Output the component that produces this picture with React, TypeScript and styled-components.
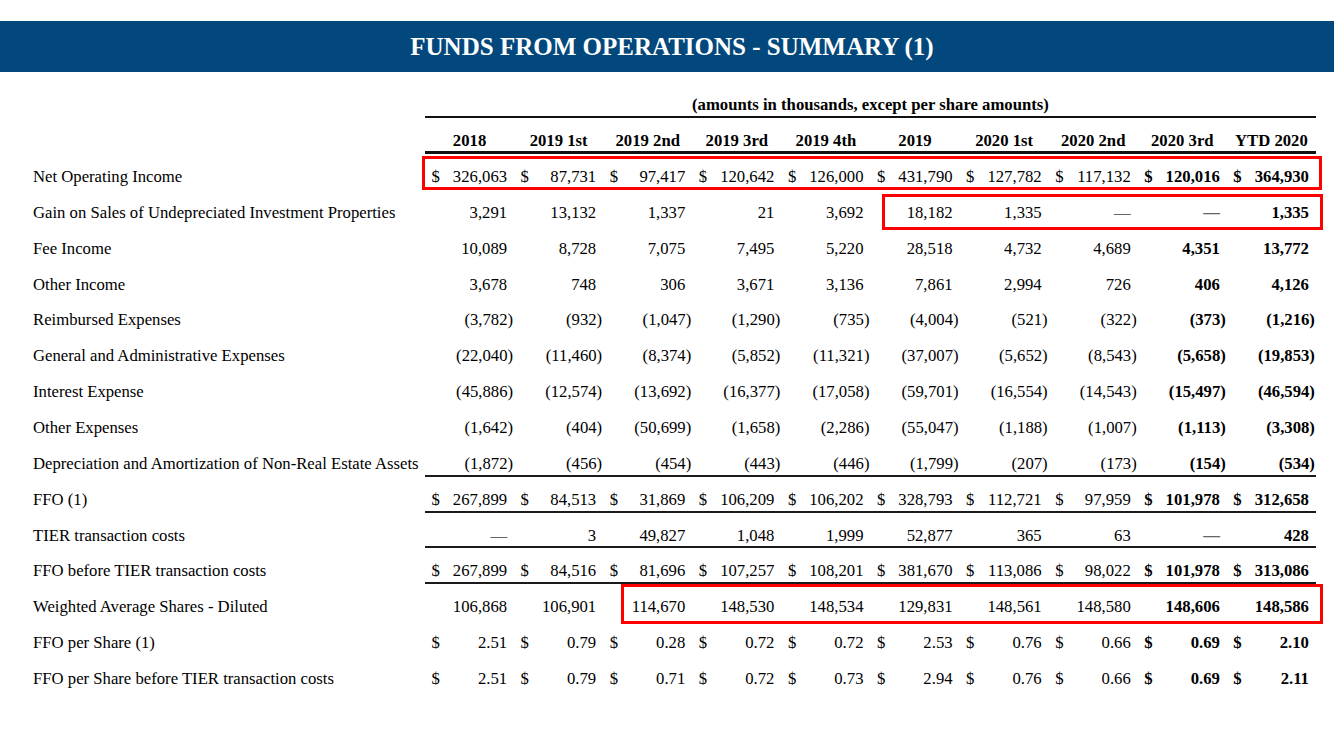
import React from "react";
import styled, { createGlobalStyle } from "styled-components";

const GlobalStyle = createGlobalStyle`
  html, body {
    margin: 0;
    padding: 0;
    background: #ffffff;
  }
  body {
    font-family: "Liberation Serif", "Times New Roman", serif;
    color: #000;
  }
`;

const COLS = "392px repeat(10, 89.1px)";

const Page = styled.div`
  position: relative;
  width: 1334px;
  height: 730px;
  padding-top: 21px;
  box-sizing: border-box;
`;

const Banner = styled.header`
  height: 51px;
  background: #03487c;
  display: flex;
  align-items: center;
  justify-content: center;
  padding-left: 10px;
  box-sizing: border-box;
`;

const Title = styled.h1`
  margin: 0;
  font-size: 25px;
  font-weight: bold;
  color: #ffffff;
  line-height: 1;
  letter-spacing: 0;
`;

const Table = styled.div`
  padding-left: 33px;
  font-size: 16.7px;
`;

const Row = styled.div<{ $h?: string }>`
  display: grid;
  grid-template-columns: ${COLS};
  height: ${(p) => p.$h ?? "35.86px"};
`;

const Subtitle = styled.div`
  grid-column: 2 / 12;
  text-align: center;
  font-weight: bold;
  line-height: 19px;
  padding-top: 23px;
  padding-bottom: 2px;
  border-bottom: 2px solid #111;
`;

const HeadCell = styled.div`
  text-align: center;
  font-weight: bold;
  line-height: 19px;
  padding-top: 13px;
  padding-bottom: 1px;
  border-bottom: 3px solid #111;
  white-space: nowrap;
`;

const Label = styled.div`
  line-height: 19px;
  padding-top: 13px;
  white-space: nowrap;
`;

const ValueCell = styled.div<{ $bold?: boolean; $rule?: boolean }>`
  display: flex;
  justify-content: space-between;
  align-items: flex-start;
  box-sizing: border-box;
  line-height: 19px;
  padding: 13px 7px 0 6.5px;
  font-weight: ${(p) => (p.$bold ? "bold" : "normal")};
  border-bottom: ${(p) => (p.$rule ? "2px solid #1a1a1a" : "none")};
  white-space: nowrap;
`;

const Dollar = styled.span``;

const Amount = styled.span<{ $neg?: boolean; $dash?: boolean }>`
  margin-right: ${(p) => (p.$neg ? "-6px" : "0")};
  color: ${(p) => (p.$dash ? "#666" : "inherit")};
`;

const Annotation = styled.div`
  position: absolute;
  box-sizing: border-box;
  border: 3px solid #ff0000;
  pointer-events: none;
`;

const headers = [
  "2018",
  "2019 1st",
  "2019 2nd",
  "2019 3rd",
  "2019 4th",
  "2019",
  "2020 1st",
  "2020 2nd",
  "2020 3rd",
  "YTD 2020",
];

type RowData = {
  label: string;
  values: string[];
  dollar?: boolean;
  rule?: boolean;
};

const rows: RowData[] = [
  {
    label: "Net Operating Income",
    dollar: true,
    values: ["326,063", "87,731", "97,417", "120,642", "126,000", "431,790", "127,782", "117,132", "120,016", "364,930"],
  },
  {
    label: "Gain on Sales of Undepreciated Investment Properties",
    values: ["3,291", "13,132", "1,337", "21", "3,692", "18,182", "1,335", "—", "—", "1,335"],
  },
  {
    label: "Fee Income",
    values: ["10,089", "8,728", "7,075", "7,495", "5,220", "28,518", "4,732", "4,689", "4,351", "13,772"],
  },
  {
    label: "Other Income",
    values: ["3,678", "748", "306", "3,671", "3,136", "7,861", "2,994", "726", "406", "4,126"],
  },
  {
    label: "Reimbursed Expenses",
    values: ["(3,782)", "(932)", "(1,047)", "(1,290)", "(735)", "(4,004)", "(521)", "(322)", "(373)", "(1,216)"],
  },
  {
    label: "General and Administrative Expenses",
    values: ["(22,040)", "(11,460)", "(8,374)", "(5,852)", "(11,321)", "(37,007)", "(5,652)", "(8,543)", "(5,658)", "(19,853)"],
  },
  {
    label: "Interest Expense",
    values: ["(45,886)", "(12,574)", "(13,692)", "(16,377)", "(17,058)", "(59,701)", "(16,554)", "(14,543)", "(15,497)", "(46,594)"],
  },
  {
    label: "Other Expenses",
    values: ["(1,642)", "(404)", "(50,699)", "(1,658)", "(2,286)", "(55,047)", "(1,188)", "(1,007)", "(1,113)", "(3,308)"],
  },
  {
    label: "Depreciation and Amortization of Non-Real Estate Assets",
    rule: true,
    values: ["(1,872)", "(456)", "(454)", "(443)", "(446)", "(1,799)", "(207)", "(173)", "(154)", "(534)"],
  },
  {
    label: "FFO (1)",
    dollar: true,
    rule: true,
    values: ["267,899", "84,513", "31,869", "106,209", "106,202", "328,793", "112,721", "97,959", "101,978", "312,658"],
  },
  {
    label: "TIER transaction costs",
    rule: true,
    values: ["—", "3", "49,827", "1,048", "1,999", "52,877", "365", "63", "—", "428"],
  },
  {
    label: "FFO before TIER transaction costs",
    dollar: true,
    rule: true,
    values: ["267,899", "84,516", "81,696", "107,257", "108,201", "381,670", "113,086", "98,022", "101,978", "313,086"],
  },
  {
    label: "Weighted Average Shares - Diluted",
    values: ["106,868", "106,901", "114,670", "148,530", "148,534", "129,831", "148,561", "148,580", "148,606", "148,586"],
  },
  {
    label: "FFO per Share (1)",
    dollar: true,
    values: ["2.51", "0.79", "0.28", "0.72", "0.72", "2.53", "0.76", "0.66", "0.69", "2.10"],
  },
  {
    label: "FFO per Share before TIER transaction costs",
    dollar: true,
    values: ["2.51", "0.79", "0.71", "0.72", "0.73", "2.94", "0.76", "0.66", "0.69", "2.11"],
  },
];

const boxes = [
  { left: 422, top: 156, width: 900, height: 34 },
  { left: 882, top: 194, width: 441, height: 36 },
  { left: 621, top: 584, width: 702, height: 40 },
];

export default function App() {
  return (
    <Page>
      <GlobalStyle />
      <Banner>
        <Title>FUNDS FROM OPERATIONS - SUMMARY (1)</Title>
      </Banner>
      <Table>
        <Row $h="auto">
          <div />
          <Subtitle>(amounts in thousands, except per share amounts)</Subtitle>
        </Row>
        <Row $h="auto">
          <div />
          {headers.map((h) => (
            <HeadCell key={h}>{h}</HeadCell>
          ))}
        </Row>
        {rows.map((r) => (
          <Row key={r.label}>
            <Label>{r.label}</Label>
            {r.values.map((v, i) => (
              <ValueCell key={i} $bold={i >= 8} $rule={r.rule}>
                <Dollar>{r.dollar ? "$" : ""}</Dollar>
                <Amount $neg={v.startsWith("(")} $dash={v === "—"}>
                  {v}
                </Amount>
              </ValueCell>
            ))}
          </Row>
        ))}
      </Table>
      {boxes.map((b, i) => (
        <Annotation
          key={i}
          style={{ left: b.left, top: b.top, width: b.width, height: b.height }}
        />
      ))}
    </Page>
  );
}
